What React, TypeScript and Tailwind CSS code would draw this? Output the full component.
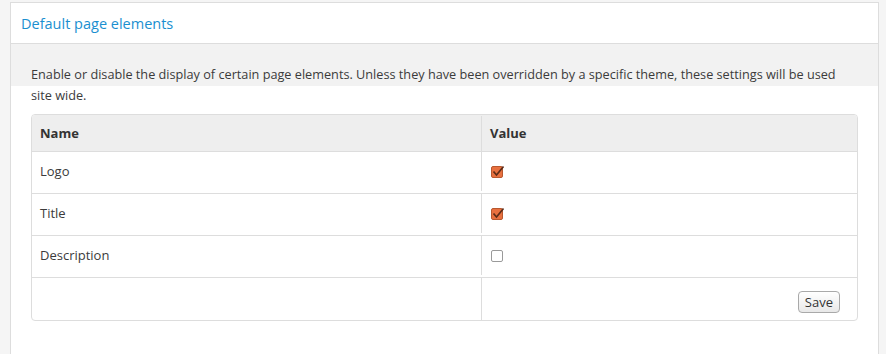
import React from 'react';

const rows = [
  { name: 'Logo', checked: true },
  { name: 'Title', checked: true },
  { name: 'Description', checked: false },
];

function Check({ checked }: { checked: boolean }) {
  if (!checked) {
    return <span className="block w-[12px] h-[12px] rounded-[2px] border border-[#9a9a9a] bg-white" />;
  }
  return (
    <span className="relative block w-[12px] h-[12px] rounded-[2px] border border-[#b8582f] bg-[#e8703f]">
      <svg className="absolute -left-[1px] -top-[3px]" width="15" height="15" viewBox="0 0 15 15">
        <path d="M2.5 7.5 L5.5 11 L12.5 2.5" fill="none" stroke="#5c2c18" strokeWidth="1.7" />
      </svg>
    </span>
  );
}

export default function App() {
  return (
    <div className="min-h-screen bg-[#f5f5f5] pt-[2px] pl-[10px] pr-[7px] font-['Open_Sans',sans-serif] text-[13px] text-[#3b3b3b]">
      <div className="bg-white border border-[#dddddd] h-[360px]">
        {/* header */}
        <div className="h-[41px] px-[10px] flex items-center border-b border-[#dddddd]">
          <h2 className="text-[14.5px] text-[#1a8fd0] pt-[2px]">Default page elements</h2>
        </div>

        {/* body */}
        <div className="px-[20px] pt-[20px] bg-[linear-gradient(#f2f2f2_42px,#ffffff_42px)]">
          <p className="text-[12.7px] leading-[21px]">
            Enable or disable the display of certain page elements. Unless they have been overridden by a specific theme, these settings will be used site wide.
          </p>

          <div className="mt-[8px] border border-[#dddddd] rounded-[4px] overflow-hidden">
            <div className="grid grid-cols-[450px_1fr] h-[37px] pt-[1px] bg-[#eeeeee] border-b border-[#dddddd] font-bold text-[#333]">
              <div className="px-[8px] flex items-center border-r border-[#dddddd]">Name</div>
              <div className="px-[8px] flex items-center">Value</div>
            </div>
            {rows.map((r) => (
              <div key={r.name} className="grid grid-cols-[450px_1fr] h-[42px] pb-[2px] border-b border-[#dddddd]">
                <div className="px-[8px] flex items-center border-r border-[#dddddd]">{r.name}</div>
                <div className="px-[9px] flex items-center">
                  <Check checked={r.checked} />
                </div>
              </div>
            ))}
            <div className="grid grid-cols-[450px_1fr] h-[42px]">
              <div className="border-r border-[#dddddd]" />
              <div className="px-[17px] pt-[6px] flex items-center justify-end">
                <button className="h-[22px] px-[6px] rounded-[4px] border border-[#a9a9a9] bg-[linear-gradient(#ffffff,#e8e8e8)] text-[13px] text-[#333] leading-none">
                  Save
                </button>
              </div>
            </div>
          </div>
        </div>
      </div>
    </div>
  );
}
